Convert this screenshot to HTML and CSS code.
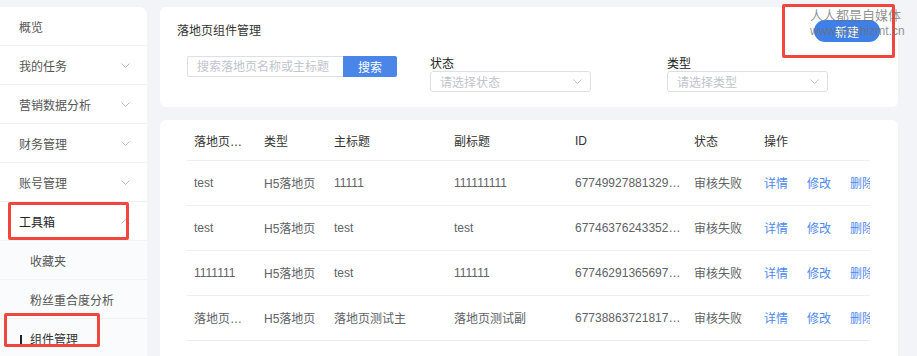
FILE: index.html
```html
<!DOCTYPE html>
<html lang="zh-CN">
<head>
    <meta charset="UTF-8">
    <title>落地页组件管理</title>
    <link rel="stylesheet" href="styles.css">
</head>
<body>
    <div class="layout">
        <div class="sidebar">
            <div class="menu-item">概览</div>
            <div class="menu-item">我的任务<svg class="arrow" width="9" height="5" viewBox="0 0 9 5"><polyline points="0.5,0.5 4.5,4.5 8.5,0.5"/></svg></div>
            <div class="menu-item">营销数据分析<svg class="arrow" width="9" height="5" viewBox="0 0 9 5"><polyline points="0.5,0.5 4.5,4.5 8.5,0.5"/></svg></div>
            <div class="menu-item">财务管理<svg class="arrow" width="9" height="5" viewBox="0 0 9 5"><polyline points="0.5,0.5 4.5,4.5 8.5,0.5"/></svg></div>
            <div class="menu-item">账号管理<svg class="arrow" width="9" height="5" viewBox="0 0 9 5"><polyline points="0.5,0.5 4.5,4.5 8.5,0.5"/></svg></div>
            <div class="menu-item open">工具箱<svg class="arrow" width="9" height="5" viewBox="0 0 9 5"><polyline points="0.5,4.5 4.5,0.5 8.5,4.5"/></svg></div>
            <div class="menu-item sub">收藏夹</div>
            <div class="menu-item sub">粉丝重合度分析</div>
            <div class="menu-item sub active">组件管理</div>
        </div>

        <div class="main">
            <div class="card filter-card">
                <div class="card-head">
                    <div class="card-title">落地页组件管理</div>
                    <button class="btn-new">新建</button>
                </div>
                <div class="filters">
                    <div class="search">
                        <input class="search-input" placeholder="搜索落地页名称或主标题">
                        <button class="search-btn">搜索</button>
                    </div>
                    <div class="field status-field">
                        <div class="field-label">状态</div>
                        <div class="select"><span>请选择状态</span><svg class="arrow" width="9" height="5" viewBox="0 0 9 5"><polyline points="0.5,0.5 4.5,4.5 8.5,0.5"/></svg></div>
                    </div>
                    <div class="field type-field">
                        <div class="field-label">类型</div>
                        <div class="select"><span>请选择类型</span><svg class="arrow" width="9" height="5" viewBox="0 0 9 5"><polyline points="0.5,0.5 4.5,4.5 8.5,0.5"/></svg></div>
                    </div>
                </div>
            </div>

            <div class="card table-card">
                <div class="table-wrap">
                    <table>
                        <colgroup>
                            <col style="width:70px">
                            <col style="width:70px">
                            <col style="width:120px">
                            <col style="width:121px">
                            <col style="width:119px">
                            <col style="width:70px">
                            <col style="width:190px">
                        </colgroup>
                        <thead>
                            <tr>
                                <th>落地页名称</th>
                                <th>类型</th>
                                <th>主标题</th>
                                <th>副标题</th>
                                <th>ID</th>
                                <th>状态</th>
                                <th>操作</th>
                            </tr>
                        </thead>
                        <tbody>
                            <tr>
                                <td>test</td>
                                <td>H5落地页</td>
                                <td>11111</td>
                                <td>111111111</td>
                                <td>677499278813294081</td>
                                <td>审核失败</td>
                                <td class="ops"><a>详情</a><a>修改</a><a>删除</a></td>
                            </tr>
                            <tr>
                                <td>test</td>
                                <td>H5落地页</td>
                                <td>test</td>
                                <td>test</td>
                                <td>677463762433523712</td>
                                <td>审核失败</td>
                                <td class="ops"><a>详情</a><a>修改</a><a>删除</a></td>
                            </tr>
                            <tr>
                                <td>1111111</td>
                                <td>H5落地页</td>
                                <td>test</td>
                                <td>111111</td>
                                <td>677462913656979456</td>
                                <td>审核失败</td>
                                <td class="ops"><a>详情</a><a>修改</a><a>删除</a></td>
                            </tr>
                            <tr>
                                <td>落地页测试名称</td>
                                <td>H5落地页</td>
                                <td>落地页测试主</td>
                                <td>落地页测试副</td>
                                <td>677388637218172928</td>
                                <td>审核失败</td>
                                <td class="ops"><a>详情</a><a>修改</a><a>删除</a></td>
                            </tr>
                            <tr>
                                <td>test</td>
                                <td>H5落地页</td>
                                <td>test</td>
                                <td>test</td>
                                <td>677388512345678912</td>
                                <td>审核失败</td>
                                <td class="ops"><a>详情</a><a>修改</a><a>删除</a></td>
                            </tr>
                        </tbody>
                    </table>
                </div>
            </div>
        </div>
    </div>

    <!-- 截图上的标注与水印 -->
    <div class="mark mark-new"></div>
    <div class="mark mark-tools"></div>
    <div class="mark mark-comp"></div>
    <div class="watermark">
        <div class="wm-cn">人人都是自媒体</div>
        <div class="wm-en">www.woshizmt.cn</div>
    </div>
</body>
</html>
```

FILE: styles.css
```css
body {
    margin: 0;
    background: #f3f4f8;
    font-family: "Liberation Sans", "Noto Sans CJK SC", sans-serif;
    font-size: 12px;
    color: #333;
    height: 356px;
    overflow: hidden;
}
.layout {
    display: flex;
    align-items: flex-start;
}
.sidebar {
    width: 147px;
    margin-top: 7px;
    background: #fff;
    border-top-right-radius: 8px;
    flex-shrink: 0;
}
.menu-item {
    height: 39px;
    box-sizing: border-box;
    border-bottom: 1px solid #f0f1f4;
    display: flex;
    align-items: center;
    justify-content: space-between;
    padding: 0 17px 0 19px;
    color: #555;
    position: relative;
}
.menu-item .arrow polyline {
    fill: none;
    stroke: #b8bbc2;
    stroke-width: 1;
}
.menu-item.open {
    color: #222;
}
.menu-item.sub {
    padding-left: 30px;
    background: #fafbfc;
    color: #555;
}
.menu-item.active {
    color: #333;
    border-bottom: none;
}
.menu-item.active::before {
    content: "";
    position: absolute;
    left: 20px;
    top: 16px;
    width: 2px;
    height: 9px;
    background: #222;
}
.main {
    flex: 1;
    min-width: 0;
    padding: 7px 19px 0 13px;
    display: flex;
    flex-direction: column;
    gap: 13px;
}
.card {
    background: #fff;
    border-radius: 6px;
}
.filter-card {
    height: 100px;
    box-sizing: border-box;
    padding: 13px 18px 0 17px;
}
.card-head {
    display: flex;
    justify-content: space-between;
    align-items: center;
    height: 22px;
}
.card-title {
    color: #333;
    line-height: 22px;
}
.btn-new {
    width: 66px;
    height: 22px;
    border: none;
    border-radius: 11px;
    background: #3f80e8;
    color: #fff;
    font-family: inherit;
    font-size: 12px;
    padding: 0;
}
.filters {
    display: flex;
    align-items: flex-start;
    margin-top: 14px;
    padding-left: 10px;
}
.search {
    display: flex;
}
.search-input {
    width: 156px;
    height: 21px;
    box-sizing: border-box;
    border: 1px solid #dcdfe6;
    border-right: none;
    border-radius: 2px 0 0 2px;
    padding: 0 9px;
    font-family: inherit;
    font-size: 12px;
    outline: none;
}
.search-input::placeholder {
    color: #c0c4cc;
}
.search-btn {
    width: 54px;
    height: 21px;
    border: none;
    border-radius: 0 2px 2px 0;
    background: #4a86e8;
    color: #fff;
    font-family: inherit;
    font-size: 12px;
    padding: 0;
}
.field {
    width: 161px;
    margin-top: 1px;
}
.status-field {
    margin-left: 33px;
}
.type-field {
    margin-left: 76px;
}
.field-label {
    line-height: 14px;
    color: #222;
}
.select {
    height: 21px;
    box-sizing: border-box;
    border: 1px solid #dcdfe6;
    border-radius: 3px;
    display: flex;
    align-items: center;
    justify-content: space-between;
    padding: 0 8px 0 9px;
    color: #c0c4cc;
}
.select .arrow polyline {
    fill: none;
    stroke: #c0c4cc;
    stroke-width: 1;
}
.table-card {
    height: 260px;
    min-width: 0;
    padding: 2px 28px 0 27px;
}
.table-wrap {
    overflow: hidden;
}
table {
    width: 760px;
    table-layout: fixed;
    border-collapse: collapse;
}
th, td {
    text-align: left;
    padding: 0 5px 0 7px;
    white-space: nowrap;
    overflow: hidden;
    text-overflow: ellipsis;
    border-bottom: 1px solid #ebeef5;
}
th {
    height: 38px;
    box-sizing: border-box;
    font-weight: normal;
    color: #333;
}
td {
    height: 45px;
    box-sizing: border-box;
    color: #606266;
}
td.ops a {
    color: #4d88ef;
    margin-right: 19px;
}
.mark {
    position: absolute;
    border: 3px solid #f2453d;
    box-sizing: border-box;
    border-radius: 2px;
}
.mark-new {
    left: 782px;
    top: 4px;
    width: 113px;
    height: 54px;
}
.mark-tools {
    left: 8px;
    top: 202px;
    width: 121px;
    height: 38px;
}
.mark-comp {
    left: 4px;
    top: 313px;
    width: 96px;
    height: 34px;
}
.watermark {
    position: absolute;
    left: 810px;
    top: 6px;
    color: rgba(110, 110, 110, 0.75);
    font-family: "Noto Sans CJK SC", sans-serif;
}
.wm-cn {
    font-size: 13px;
    line-height: 18px;
}
.wm-en {
    font-family: "Liberation Sans", sans-serif;
    font-size: 12px;
    line-height: 15px;
}
```
